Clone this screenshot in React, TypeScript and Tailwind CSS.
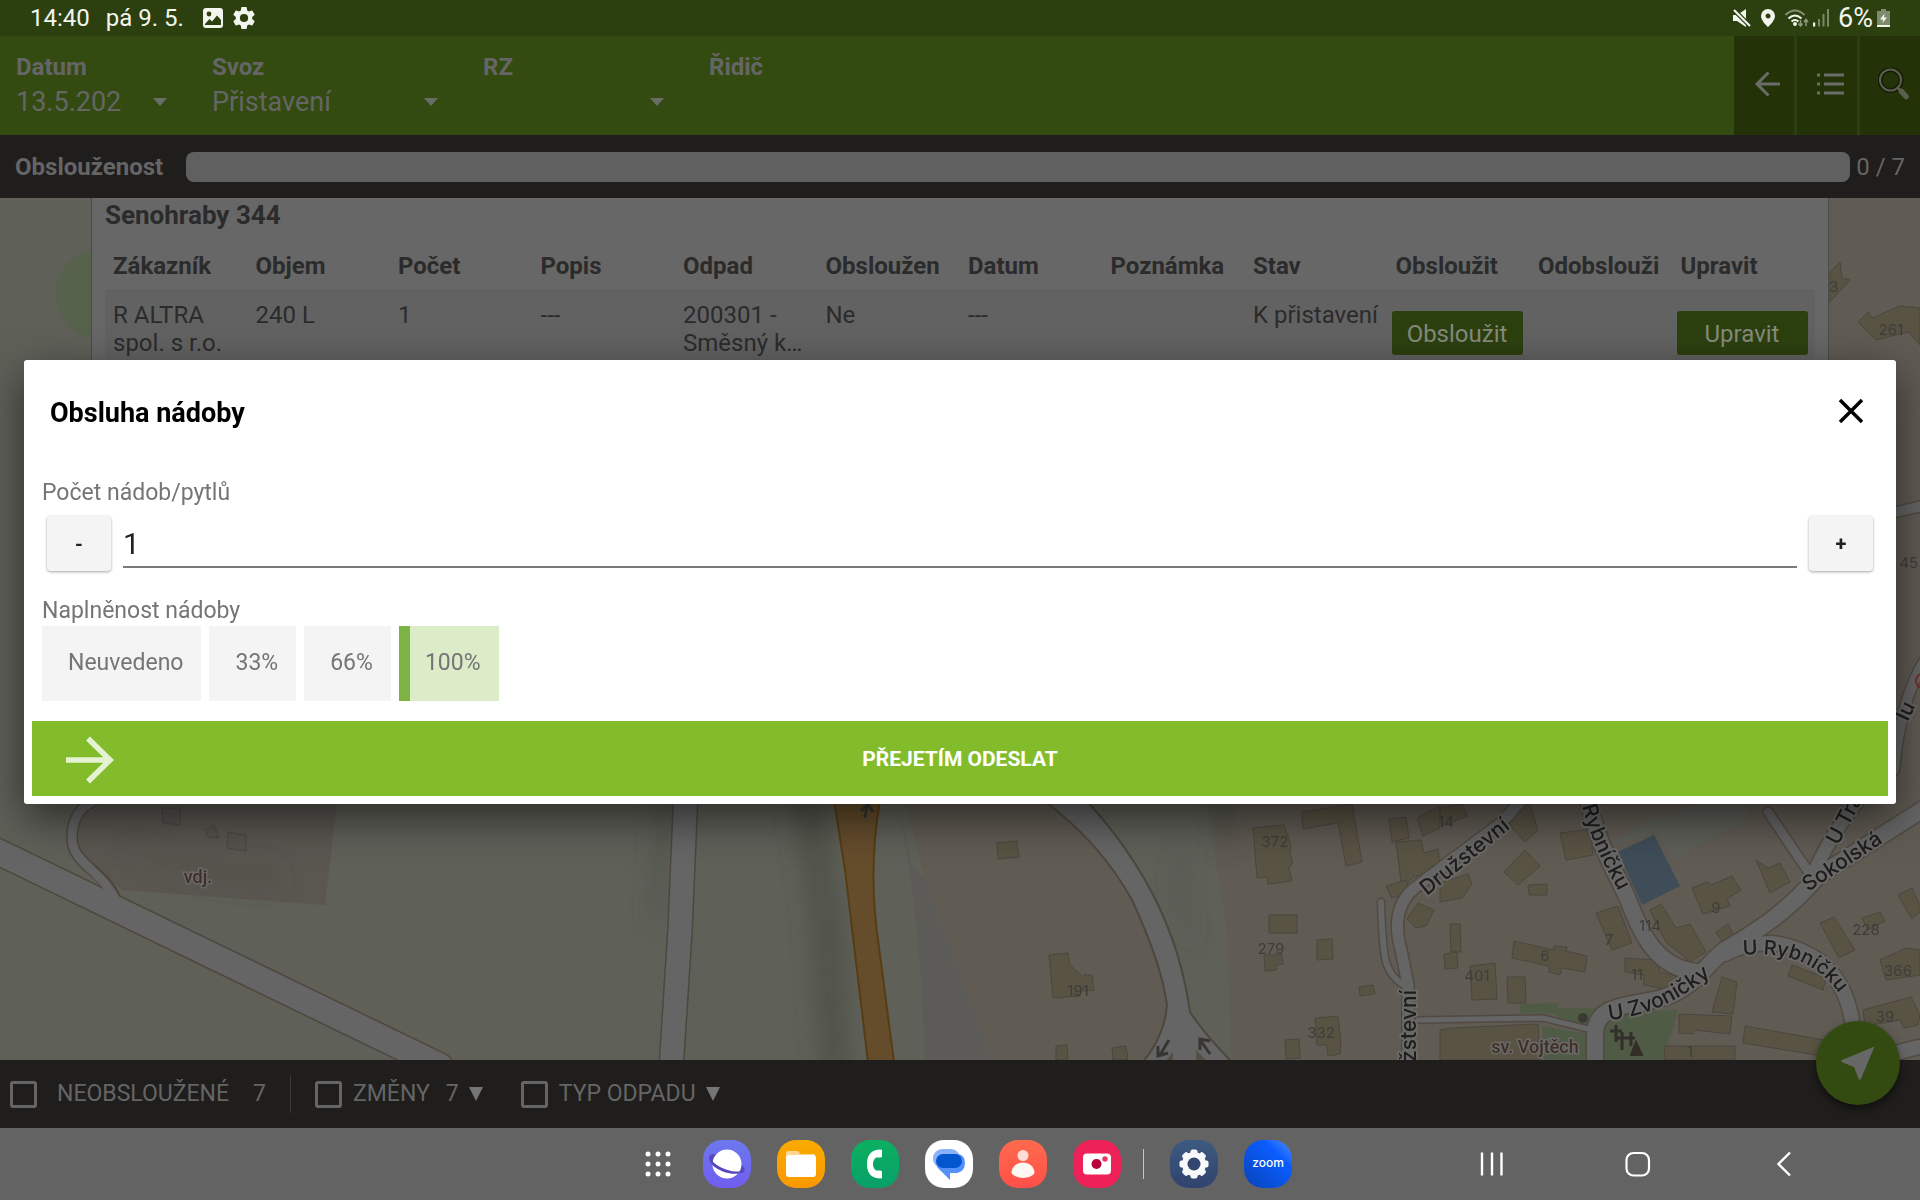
import { useState, type ReactNode } from 'react';

const sloupce = ['Zákazník', 'Objem', 'Počet', 'Popis', 'Odpad', 'Obsloužen', 'Datum', 'Poznámka', 'Stav', 'Obsloužit', 'Odobslouži', 'Upravit'];

const naplnenosti = ['Neuvedeno', '33%', '66%', '100%'];

// Budovy na mapě
const budovy = [
  '997,843 1017,841 1019,857 998,859',
  '1049,955 1068,953 1070,965 1083,977 1084,975 1092,975 1094,990 1083,991 1081,988 1080,996 1053,998',
  '1056,1046 1067,1045 1068,1060 1056,1060',
  '1112,1048 1126,1046 1128,1060 1113,1060',
  '1253,828 1284,825 1291,845 1290,855 1293,862 1289,868 1292,881 1268,884 1267,877 1257,878',
  '1302,812 1352,804 1362,862 1346,866 1338,823 1303,829',
  '1269,915 1297,915 1297,933 1269,933',
  '1264,955 1282,955 1283,964 1276,965 1276,970 1265,971',
  '1317,940 1332,939 1333,959 1317,960',
  '1359,987 1373,985 1375,994 1360,996',
  '1315,1018 1338,1016 1341,1043 1340,1054 1328,1056 1327,1045 1317,1045',
  '1285,1040 1299,1039 1300,1058 1286,1059',
  '1389,819 1406,817 1409,838 1392,842',
  '1396,842 1421,840 1424,853 1438,849 1440,868 1412,878 1402,890',
  '1386,886 1406,880 1410,892 1392,898',
  '1417,818 1440,806 1440,828 1423,836',
  '1418,903 1434,910 1426,926 1416,928 1407,919',
  '1440,808 1462,804 1467,816 1442,826',
  '1505,810 1530,804 1538,830 1525,842 1512,828',
  '1560,833 1590,829 1593,855 1566,860',
  '1525,850 1540,866 1518,885 1504,872',
  '1440,883 1468,874 1472,884 1462,898 1440,902',
  '1528,885 1547,884 1547,895 1529,895',
  '1596,913 1618,906 1632,943 1612,950',
  '1650,910 1661,904 1676,928 1690,924 1706,952 1690,962 1666,942',
  '1692,888 1707,882 1711,885 1732,876 1741,890 1727,899 1730,906 1703,914',
  '1756,860 1768,868 1780,863 1790,882 1770,893',
  '1716,932 1728,924 1734,936 1722,942',
  '1514,941 1554,950 1554,946 1567,947 1566,951 1587,956 1585,972 1562,968 1560,975 1549,972 1549,966 1512,958',
  '1470,966 1495,963 1497,999 1472,1000',
  '1507,977 1525,977 1526,1003 1508,1003',
  '1450,924 1460,924 1461,952 1451,952',
  '1444,954 1457,952 1458,968 1445,969',
  '1625,958 1657,960 1660,972 1676,976 1670,990 1644,985 1644,975 1625,972',
  '1722,977 1737,982 1733,1014 1712,1012',
  '1679,1014 1732,1016 1730,1034 1694,1030 1693,1034 1679,1033',
  '1745,1026 1830,1041 1828,1057 1743,1043',
  '1665,1046 1735,1046 1735,1060 1664,1060',
  '1820,923 1834,917 1855,950 1839,958',
  '1792,965 1826,978 1823,990 1788,976',
  '1862,918 1880,912 1885,921 1868,930',
  '1898,895 1912,888 1922,910 1912,919',
  '1880,960 1906,948 1920,950 1920,975 1886,980',
  '1863,1010 1911,997 1920,1015 1918,1025 1904,1028 1900,1020 1865,1026',
  '1451,1028 1538,1024 1540,1060 1440,1060 1440,1030',
  '1830,272 1840,262 1842,278 1850,280 1830,302',
  '1858,322 1868,312 1872,318 1900,306 1920,308 1920,345 1908,332 1876,340',
];

const cisla: [number, number, string][] = [
  [1275, 847, '372'], [1271, 954, '279'], [1078, 996, '191'], [1321, 1038, '332'],
  [1446, 827, '14'], [1545, 961, '6'], [1477, 981, '401'], [1609, 945, '7'],
  [1650, 931, '114'], [1716, 913, '9'], [1637, 980, '11'], [1690, 1057, '1'],
  [1866, 935, '228'], [1898, 976, '366'], [1885, 1022, '39'], [1834, 292, '3'], [1891, 335, '261'], [1909, 568, '45'],
];

const silnice: [string, number][] = [
  ['M1418 1020L1543 1018L1592 1030', 5],
  ['M1381 902C1382 935 1383 950 1386 962Q1390 976 1402 984', 6],
  ['M1520 802L1500 824L1420 884C1396 900 1394 925 1401 950L1408 985V1062', 11],
  ['M1768 812L1812 877', 9],
  ['M1812 877Q1830 835 1857 802', 13],
  ['M1588 800C1600 850 1615 870 1627 897C1640 930 1655 970 1700 972', 16],
  ['M1925 808L1818 876C1785 915 1750 935 1725 950C1705 965 1705 975 1680 990C1650 1010 1595 995 1595 1035V1062', 16],
  ['M1725 954Q1745 943 1773 943Q1850 955 1854 1040', 14],
  ['M1880 1060Q1900 1050 1925 1046', 14],
  ['M1896 512L1922 506', 10],
  ['M1894 770Q1900 700 1925 660', 10],
];

function Mapa() {
  return (
    <svg viewBox="0 198 1920 862" preserveAspectRatio="xMidYMid slice" className="absolute inset-0 h-full w-full" fontFamily="Inter, sans-serif" aria-hidden="true">
      <defs>
        <filter id="stin" x="-50%" y="-50%" width="200%" height="200%"><feGaussianBlur stdDeviation="10" /></filter>
        <path id="druzstevni" d="M1427 896L1512 827" />
        <path id="rybnicku" d="M1582 806C1594 850 1608 870 1622 898" />
        <path id="rybnicku2" d="M1743 955C1780 952 1815 958 1841 996" />
        <path id="zvonicky" d="M1609 1020C1650 1016 1680 1000 1718 970" />
        <path id="sokolska" d="M1808 892L1890 838" />
      </defs>
      <rect y="198" width="1920" height="862" fill="#5f6058" />
      <circle cx="101" cy="294" r="45" fill="#56624c" />
      <path d="M905 804L925 880L992 1060H1160L1170 1010Q1150 900 1060 804Z" fill="#605b53" />
      <path d="M897 804L912 865L925 880L992 1060H925Q920 900 897 804Z" fill="#5c5b57" />
      <path d="M1207 804L1227 930L1232 1060H1920V198H1829V804Z" fill="#605b53" />
      <path d="M80 804H337L325 905L122 890L78 850Z" fill="#5a5751" />
      <g filter="url(#stin)" fill="#4f5248">
        <path d="M790 790H822L845 930L850 1080H820L810 930Z" opacity=".8" />
        <path d="M658 790H676L662 920H650Z" opacity=".6" />
        <path d="M130 845Q190 870 270 865L280 885Q200 890 130 850Z" opacity=".8" />
        <path d="M1215 790H1230V845H1220Z" />
        <path d="M1180 850Q1165 890 1180 920L1195 950Q1185 890 1190 850Z" opacity=".4" />
      </g>
      <path d="M1600 850Q1640 820 1700 804H1748Q1750 818 1730 828L1675 858L1655 833Z" fill="#5d5f58" />
      <path d="M1606 1012L1678 1010L1663 1060H1603ZM1542 1026L1588 1034V1060H1545ZM1520 1004L1558 1003V1014L1520 1013ZM1558 1008H1596L1588 1026L1556 1016Z" fill="#4f5b45" />
      <g fill="#595344" stroke="#4b4740" strokeWidth="1">
        {budovy.map(b => <polygon key={b} points={b} />)}
        <path d="M162 808H180V825L163 823ZM205 830L214 825L219 838L208 837ZM228 832L246 835V851L227 848Z" fill="#55534f" />
      </g>
      <path d="M1618 852L1654 835L1680 886L1642 905Z" fill="#3f4d58" />

      <g fill="none" strokeLinecap="round">
        {silnice.map(([d, w]) => <path key={d} d={d} stroke="#504a41" strokeWidth={w + 3} />)}
        {silnice.map(([d, w]) => <path key={d} d={d} stroke="#656565" strokeWidth={w} />)}
        <path d="M-20 843L440 1066" stroke="#4e473d" strokeWidth="28" />
        <path d="M92 802Q72 812 72 838C72 865 105 870 116 900" stroke="#4e473d" strokeWidth="12" />
        <path d="M92 802Q72 812 72 838C72 865 105 870 118 906" stroke="#656565" strokeWidth="9" />
        <path d="M-20 843L440 1066" stroke="#656565" strokeWidth="25" />
        <path d="M686 790L680 930L671 1070" stroke="#4e473d" strokeWidth="26" />
        <path d="M686 790L680 930L671 1070" stroke="#656565" strokeWidth="23" />
      </g>
      <path d="M834 800L845 870L868 1062H894L878 940Q868 870 880 800Z" fill="#654d2c" stroke="#563d15" strokeWidth="2" />
      <path d="M1043 800Q1100 842 1132 900Q1162 965 1167 1005Q1165 1035 1143 1062H1232Q1205 1035 1190 1012C1180 940 1150 870 1086 800Z" fill="#656565" stroke="#4e473d" strokeWidth="2" />
      <path d="M1165 1062L1173 1052V1062ZM1196 1050L1208 1062H1196Z" fill="#554e44" />
      <g stroke="#373635" strokeWidth="3" fill="none">
        <path d="M1169 1040L1160 1055M1158 1046V1056L1168 1053" />
        <path d="M1210 1054L1201 1041M1200 1050V1039L1210 1041" />
        <path d="M865 818L867 806M861 811L868 804L873 812" />
      </g>
      <g stroke="#332e29" strokeWidth="3" fill="none">
        <path d="M1616 1025V1042M1610 1031H1622M1622 1032V1050M1617 1038H1635M1631 1032V1046" />
        <path d="M1636 1042L1631 1055H1642Z" fill="#332e29" strokeWidth="2" />
      </g>
      <circle cx="1583" cy="1018" r="5" fill="#3c3a35" />
      <circle cx="1924" cy="681" r="8" fill="none" stroke="#7a2a24" strokeWidth="2" />

      <g fontSize="15" fill="#3f3d3a" textAnchor="middle">
        {cisla.map(([x, y, t]) => <text key={t} x={x} y={y}>{t}</text>)}
      </g>
      <g fontSize="21" fontWeight="500" fill="#1d1d1d" stroke="#6a6967" strokeWidth="4" strokeLinejoin="round" style={{ paintOrder: 'stroke' }}>
        <text><textPath href="#druzstevni">Družstevní</textPath></text>
        <text><textPath href="#rybnicku">Rybníčku</textPath></text>
        <text fontSize="20"><textPath href="#rybnicku2">U Rybníčku</textPath></text>
        <text><textPath href="#zvonicky">U Zvoničky</textPath></text>
        <text><textPath href="#sokolska">Sokolská</textPath></text>
        <text transform="translate(1838 846) rotate(-62)">U Tra</text>
        <text transform="translate(1416 1062) rotate(-90)">žstevní</text>
        <text transform="translate(1908 722) rotate(-65)">lu</text>
      </g>
      <g fontSize="18" fontWeight="500" fill="#3f2f28" stroke="#6a6967" strokeWidth="3" textAnchor="middle" fontFamily="Roboto, sans-serif" style={{ paintOrder: 'stroke' }}>
        <text x="198" y="883">vdj.</text>
        <text x="1535" y="1053">sv. Vojtěch</text>
      </g>
    </svg>
  );
}

function StavovyRadek() {
  return (
    <div className="flex h-9 items-center bg-[#2c400f] pr-[30px] pl-[30px] text-2xl text-[#f2f4ee]">
      <span>14:40</span>
      <span className="ml-4">pá 9. 5.</span>
      <svg viewBox="0 0 22 22" className="ml-[18px] h-[22px] w-[22px]">
        <rect x="1" y="1" width="20" height="20" rx="3" fill="currentColor" />
        <circle cx="7" cy="7" r="2.4" fill="#2c400f" />
        <path d="M3 17L7.500 12L10 14.500L15 8.500L19 13V18H3Z" fill="#2c400f" />
      </svg>
      <svg viewBox="1.500 1.500 21 21" className="ml-2 h-6 w-6" fill="currentColor">
        <path d="M19.140 12.940c.040-.3.060-.61.060-.94s-.02-.64-.07-.94l2.030-1.580a.49.490 0 0 0 .12-.61l-1.920-3.320a.49.490 0 0 0-.59-.22l-2.390.96a7 7 0 0 0-1.620-.94l-.36-2.540a.48.480 0 0 0-.48-.41h-3.840a.47.470 0 0 0-.47.410l-.36 2.540a7 7 0 0 0-1.620.94l-2.390-.96a.48.480 0 0 0-.59.220L2.740 8.870a.47.470 0 0 0 .12.610l2.030 1.580a6 6 0 0 0 0 1.880l-2.030 1.580a.49.490 0 0 0-.12.610l1.920 3.320c.12.220.37.290.59.220l2.390-.96c.5.380 1.030.7 1.620.94l.36 2.540c.05.240.24.410.48.410h3.840c.24 0 .44-.17.470-.41l.36-2.540a7 7 0 0 0 1.620-.94l2.390.96c.22.080.47 0 .59-.22l1.920-3.320a.47.470 0 0 0-.12-.61zM12 15.600a3.600 3.600 0 1 1 0-7.200 3.600 3.600 0 0 1 0 7.200z" />
      </svg>
      <div className="ml-auto flex items-center">
        <svg viewBox="0 0 18 18" className="h-[18px] w-[18px]" fill="currentColor">
          <path d="M0 6H4L13 0V18L4 12H0Z" />
          <path d="M1 1L17 17" stroke="#2c400f" strokeWidth="4.500" />
          <path d="M1 1L17 17" stroke="currentColor" strokeWidth="2.200" />
        </svg>
        <svg viewBox="0 0 14 18" className="ml-2.5 h-[18px] w-3.5" fill="currentColor">
          <path fillRule="evenodd" d="M7 0A7 7 0 0 0 0 7C0 12 7 18 7 18S14 12 14 7A7 7 0 0 0 7 0ZM7 4.500A2.500 2.500 0 1 1 7 9.500A2.500 2.500 0 0 1 7 4.500Z" />
        </svg>
        <svg viewBox="0 0 24 18" className="ml-2.5 h-[18px] w-6" fill="none" stroke="currentColor" strokeWidth="2">
          <path d="M0.500 6Q10 -3 19.500 6" opacity=".45" />
          <path d="M3.500 9.500Q10 3.500 16.500 9.500M6.500 12.500Q10 9.500 13.500 12.500" />
          <circle cx="10" cy="15" r="1" />
          <path d="M15.500 11V17M13.500 14.500L15.500 17L17.500 14.500M21 17V11M19 13L21 10.500L23 13" strokeWidth="1.500" opacity=".5" />
        </svg>
        <svg viewBox="0 0 17 18" className="ml-1 h-[18px] w-[17px]" fill="currentColor">
          <rect x="0" y="13.500" width="2.200" height="4" />
          <path d="M5 10H7V17.500H5ZM9.500 5H11.500V17.500H9.500ZM14 0H16V17.500H14Z" opacity=".4" />
        </svg>
        <span className="ml-2 text-[27px] leading-9">6%</span>
        <svg viewBox="0 0 13 18" className="ml-1 h-[18px] w-[13px]">
          <path d="M4 0H9V2H13V18H0V2H4Z" fill="#7d8a6c" />
          <path d="M0 16H13V18H0ZM7.500 4.500L3 10.500H6L5.500 14L10 8.500H7Z" fill="#f2f4ee" />
        </svg>
      </div>
    </div>
  );
}

function Sipka() {
  return (
    <svg viewBox="0 0 14 8" className="pointer-events-none h-2 w-3.5 shrink-0 fill-[#6b6c68]">
      <path d="M0 0H14L7 8Z" />
    </svg>
  );
}

function Vyber({ id, label, value, className }: { id: string; label: string; value: string; className: string }) {
  return (
    <div className={className}>
      <label htmlFor={id} className="block text-2xl leading-8 font-bold">{label}</label>
      <div className="flex items-center">
        <select id={id} defaultValue={value} className="h-[38px] min-w-0 flex-1 appearance-none text-[27px] leading-[38px] outline-none">
          <option>{value}</option>
        </select>
        <Sipka />
      </div>
    </div>
  );
}

function Filtr({ label, pocet, sipka, className }: { label: string; pocet?: number; sipka?: boolean; className: string }) {
  return (
    <label className={'flex items-center ' + className}>
      <input type="checkbox" className="mr-[11px] h-[27px] w-[27px] appearance-none rounded-[3px] border-3 border-[#656565] checked:bg-[#656565]" />
      <span>{label}</span>
      {pocet !== undefined && <span className={sipka ? 'ml-4' : 'ml-6'}>{pocet}</span>}
      {sipka && (
        <svg viewBox="0 0 14 14" className="ml-2.5 h-3.5 w-3.5 fill-[#757575]"><path d="M0 0H14L7 14Z" /></svg>
      )}
    </label>
  );
}

function Aplikace({ nazev, pozadi, children }: { nazev: string; pozadi: string; children: ReactNode }) {
  return (
    <button aria-label={nazev} className={'h-12 w-12 overflow-hidden rounded-[19px] ' + pozadi}>
      <svg viewBox="0 0 48 48" className="h-12 w-12">{children}</svg>
    </button>
  );
}

function SystemovaLista() {
  return (
    <nav className="flex h-[72px] items-center bg-[#636363]">
      <div className="ml-[33%] flex items-center gap-[26px] pl-[11px]">
        <button aria-label="Aplikace" className="mr-1.5 h-[26px] w-[26px]">
          <svg viewBox="0 0 26 26" className="h-[26px] w-[26px] fill-white">
            {[3, 13, 23].map(y => [3, 13, 23].map(x => <circle key={x + '-' + y} cx={x} cy={y} r="2.500" />))}
          </svg>
        </button>
        <Aplikace nazev="Internet" pozadi="bg-linear-to-b from-[#6c78ee] to-[#705df0]">
          <ellipse cx="24" cy="23.500" rx="19" ry="6.500" transform="rotate(23 24 23.500)" fill="#5a46bd" />
          <circle cx="24" cy="24" r="14.500" fill="#fff" />
          <path d="M8 15C4 24 32 36 41 30L40 32C30 38 4 28 6.500 17Z" fill="#5a46bd" />
        </Aplikace>
        <Aplikace nazev="Moje soubory" pozadi="bg-linear-to-b from-[#f9ab00] to-[#fb9800]">
          <path d="M9 13Q9 11 11 11H20Q22 11 23 14H38V22H9Z" fill="#fdd692" />
          <rect x="9" y="15" width="30" height="22" rx="3" fill="#fff" />
        </Aplikace>
        <Aplikace nazev="Telefon" pozadi="bg-linear-to-b from-[#0cb060] to-[#08a068]">
          <path d="M30 9.500C20 9.500 16 15 16 24S20 38.500 30 38.500Q31 38.500 31 37V32Q31 30.500 29.500 30.500L25 30.500Q22 28 22 24T25 17.500L29.500 17.500Q31 17.500 31 16V11Q31 9.500 30 9.500Z" fill="#fff" />
        </Aplikace>
        <Aplikace nazev="Zprávy" pozadi="bg-white">
          <rect x="8" y="9" width="27" height="19" rx="9" fill="#8ab1fb" />
          <path d="M18 14H33Q40 15 40 23T32 33H25V40L12 27Z" fill="#5491fb" />
          <rect x="11" y="14" width="26" height="14" rx="7" fill="#0456cf" />
        </Aplikace>
        <Aplikace nazev="Kontakty" pozadi="bg-linear-to-b from-[#ff6a4d] to-[#ff4f49]">
          <circle cx="24" cy="15.500" r="5.500" fill="#ffdcd6" />
          <path d="M12.500 33C13 19 35 19 35.500 33C31 39.500 17 39.500 12.500 33Z" fill="#fff8f2" />
        </Aplikace>
        <Aplikace nazev="Fotoaparát" pozadi="bg-[#ee2158]">
          <rect x="10" y="13.500" width="28" height="21" rx="4" fill="#fff" />
          <circle cx="23.500" cy="24" r="5" fill="#b8003a" />
          <circle cx="32" cy="19" r="2.700" fill="#e8395f" />
        </Aplikace>
        <div className="-ml-1 h-[30px] w-px bg-[#c4c4c4]" />
        <Aplikace nazev="Nastavení" pozadi="bg-linear-to-b from-[#3e5a80] to-[#30436c]">
          <g fill="#f7f9fb">
            <circle cx="24" cy="24" r="12" />
            {[0, 45, 90, 135, 180, 225, 270, 315].map(u => (
              <rect key={u} x="20.500" y="9.500" width="7" height="8" rx="2" transform={`rotate(${u} 24 24)`} />
            ))}
          </g>
          <circle cx="24" cy="24" r="6.500" fill="#33466f" />
        </Aplikace>
        <Aplikace nazev="Zoom" pozadi="bg-linear-to-bl from-[#4a8df8] via-[#0b5cff] via-30% to-[#0744b8]">
          <text x="24" y="27" textAnchor="middle" fontSize="12" fontWeight="500" fontFamily="Inter, sans-serif" fill="#fff">zoom</text>
        </Aplikace>
      </div>
      <div className="mr-28 ml-auto flex gap-[98px]">
        <button aria-label="Poslední" className="h-12 w-12">
          <svg viewBox="0 0 48 48" className="h-12 w-12" stroke="#fff" strokeWidth="2.400"><path d="M14 12.500V35.500M24 12.500V35.500M33.500 12.500V35.500" /></svg>
        </button>
        <button aria-label="Domů" className="h-12 w-12">
          <svg viewBox="0 0 48 48" className="h-12 w-12" stroke="#fff" strokeWidth="2.200" fill="none"><rect x="12.500" y="13" width="22.500" height="22.500" rx="7" /></svg>
        </button>
        <button aria-label="Zpět" className="h-12 w-12">
          <svg viewBox="0 0 48 48" className="h-12 w-12" stroke="#fff" strokeWidth="2.400" fill="none"><path d="M30 12.500L18.500 24L30 35.500" /></svg>
        </button>
      </div>
    </nav>
  );
}

function ObsluhaDialog() {
  const [pocet, setPocet] = useState(1);
  const [napln, setNapln] = useState('100%');
  const tlacitko = 'h-[55px] w-16 shrink-0 rounded bg-[#f4f4f4] text-xl font-bold text-[#212121] shadow-[0_1px_3px_rgba(0,0,0,0.35)]';

  return (
    <div className="fixed inset-x-0 top-9 bottom-[72px] flex items-center px-6">
      <div role="dialog" aria-labelledby="nadpis" className="w-full rounded-[3px] bg-white px-2 pb-2 shadow-[0_14px_44px_rgba(0,0,0,0.55)]">
        <div className="flex h-[106px] items-center justify-between pr-6 pl-[18px]">
          <h2 id="nadpis" className="text-[27px] font-bold text-black">Obsluha nádoby</h2>
          <button aria-label="Zavřít" className="pb-1">
            <svg viewBox="0 0 26 26" className="h-[26px] w-[26px]" stroke="#000" strokeWidth="3.500"><path d="M2 2L24 24M24 2L2 24" /></svg>
          </button>
        </div>

        <div className="px-2.5 pt-2 text-[23px] text-[#757575]">
          <label htmlFor="pocet" className="block leading-[38px]">Počet nádob/pytlů</label>
          <div className="flex items-center gap-3 px-[5px] pt-1">
            <button onClick={() => setPocet(Math.max(0, pocet - 1))} className={tlacitko}>-</button>
            <div className="flex h-[55px] flex-1 items-start">
              <input
                id="pocet"
                inputMode="numeric"
                value={pocet}
                onChange={e => setPocet(Number(e.target.value) || 0)}
                className="h-[52px] w-full border-b-2 border-[#7a7a7a] pt-1 text-[30px] text-[#212121] outline-none"
              />
            </div>
            <button onClick={() => setPocet(pocet + 1)} className={tlacitko}>+</button>
          </div>

          <fieldset className="mt-6">
            <legend className="block h-[31px] leading-8">Naplněnost nádoby</legend>
            <div className="flex gap-2">
              {naplnenosti.map(n => (
                <label
                  key={n}
                  className={n === napln
                    ? 'flex h-[75px] items-center border-l-11 border-[#7cb342] bg-[#dcebc8] pr-[18px] pl-[15px]'
                    : 'flex h-[75px] items-center bg-[#f4f4f4] pr-[18px] pl-[26px]'}
                >
                  <input type="radio" name="napln" className="sr-only" checked={n === napln} onChange={() => setNapln(n)} />
                  {n}
                </label>
              ))}
            </div>
          </fieldset>
        </div>

        <button className="relative mt-5 flex h-[75px] w-full items-center justify-center bg-[#83bc2a] pt-0.5 text-[21px] font-bold text-white">
          <svg viewBox="0 0 48 48" className="absolute left-[34px] h-12 w-12" fill="none" stroke="#e6f3d3" strokeWidth="5.500">
            <path d="M0 24H44M22 2.500L44 24L22 45.500" />
          </svg>
          PŘEJETÍM ODESLAT
        </button>
      </div>
    </div>
  );
}

export default function App() {
  return (
    <div className="flex min-h-screen flex-col bg-[#1f1e1c] font-[Roboto,sans-serif]">
      <StavovyRadek />

      <header className="flex h-[99px] bg-[#334b10] text-[#656565]">
        <div className="flex flex-1 pt-[15px] pl-4">
          <Vyber id="datum" label="Datum" value="13.5.202" className="mr-[45px] w-[151px]" />
          <Vyber id="svoz" label="Svoz" value="Přistavení" className="mr-[45px] w-[226px]" />
          <Vyber id="rz" label="RZ" value="" className="mr-[45px] w-[181px]" />
          <div className="text-2xl leading-8 font-bold">Řidič</div>
        </div>
        <div className="flex gap-[3px] bg-[#2c400f]">
          <button aria-label="Zpět na výběr" className="flex w-15 items-center bg-[#233207] pb-1 pl-5">
            <svg viewBox="0 0 26 26" className="h-[26px] w-[26px]" fill="none" stroke="#6b6c68" strokeWidth="3"><path d="M26 13H3M14.500 1.500L3 13L14.500 24.500" /></svg>
          </button>
          <button aria-label="Seznam" className="flex w-15 items-center bg-[#233207] pb-1 pl-5">
            <svg viewBox="0 0 28 24" className="h-6 w-7" fill="#6b6c68">
              {[1.5, 10.5, 19.5].map(y => <path key={y} d={`M0 ${y}h3v3h-3zM7 ${y}h20v3h-20z`} />)}
            </svg>
          </button>
          <button aria-label="Hledat" className="flex w-15 items-center bg-[#233207] pb-1 pl-[18px]">
            <svg viewBox="0 0 32 32" className="h-8 w-8" fill="none" strokeLinecap="round">
              <circle cx="12.500" cy="12" r="10.500" stroke="#151b08" strokeWidth="5" />
              <circle cx="12.500" cy="12" r="10.500" stroke="#5b5f50" strokeWidth="2" />
              <path d="M20 20L23 23" stroke="#5b5f50" strokeWidth="2.500" />
              <path d="M23.500 23.500L28 28.500" stroke="#5b5f50" strokeWidth="5.500" />
            </svg>
          </button>
        </div>
      </header>

      <div className="flex h-[63px] items-center bg-[#1f1e1c] px-[15px] text-2xl text-[#656565]">
        <span id="obslouzenost" className="font-bold">Obslouženost</span>
        <div role="progressbar" aria-labelledby="obslouzenost" aria-valuenow={0} aria-valuemax={7} className="mr-1.5 ml-[23px] h-[30px] flex-1 rounded-lg bg-[#606060]" />
        <span>0 / 7</span>
      </div>

      <main className="relative flex-1 overflow-hidden">
        <Mapa />
        <section className="relative mx-[91px] min-h-[300px] border-x border-[#4a4a48] bg-[#676767] px-[13px] text-2xl text-[#2b2b2b]">
          <h1 className="pb-[10px] text-[26px] leading-[35px] font-bold">Senohraby 344</h1>
          <table className="w-full table-fixed">
            <thead>
              <tr className="h-[46px]">
                {sloupce.map(s => <th key={s} className="px-2 text-left font-bold whitespace-nowrap">{s}</th>)}
              </tr>
            </thead>
            <tbody>
              <tr className="bg-[#626262] align-top leading-7 whitespace-nowrap">
                <td className="px-2 pt-3">R ALTRA<br />spol. s r.o.</td>
                <td className="px-2 pt-3">240 L</td>
                <td className="px-2 pt-3">1</td>
                <td className="px-2 pt-3">---</td>
                <td className="px-2 pt-3">200301 -<br />Směsný k…</td>
                <td className="px-2 pt-3">Ne</td>
                <td className="px-2 pt-3">---</td>
                <td className="px-2 pt-3"></td>
                <td className="px-2 pt-3">K přistavení</td>
                <td className="px-1 pt-[22px] pb-6">
                  <button className="h-11 w-[131px] rounded-[3px] bg-[#2c400f] pt-0.5 text-[#858a7c]">Obsloužit</button>
                </td>
                <td></td>
                <td className="px-1 pt-[22px] pb-6">
                  <button className="h-11 w-[131px] rounded-[3px] bg-[#2c400f] pt-0.5 text-[#858a7c]">Upravit</button>
                </td>
              </tr>
            </tbody>
          </table>
        </section>
      </main>

      <footer className="relative flex h-[68px] items-center bg-[#1f1e1c] pl-2.5 text-[23px] text-[#656565]">
        <Filtr label="NEOBSLOUŽENÉ" pocet={7} className="[&>input]:mr-5" />
        <div className="mx-6 h-[38px] w-px bg-[#393836]" />
        <Filtr label="ZMĚNY" pocet={7} sipka className="mr-[38px]" />
        <Filtr label="TYP ODPADU" sipka className="" />
        <button aria-label="Moje poloha" className="absolute -top-[39px] right-5 flex h-21 w-21 items-center justify-center rounded-full bg-[#334b10] shadow-[0_4px_8px_rgba(0,0,0,0.5)]">
          <svg viewBox="0 0 24 24" className="h-11 w-11 fill-[#676767]"><path d="M21 3L3 10.530v.98l6.840 2.650L12.480 21h.98L21 3z" /></svg>
        </button>
      </footer>

      <SystemovaLista />
      <ObsluhaDialog />
    </div>
  );
}
